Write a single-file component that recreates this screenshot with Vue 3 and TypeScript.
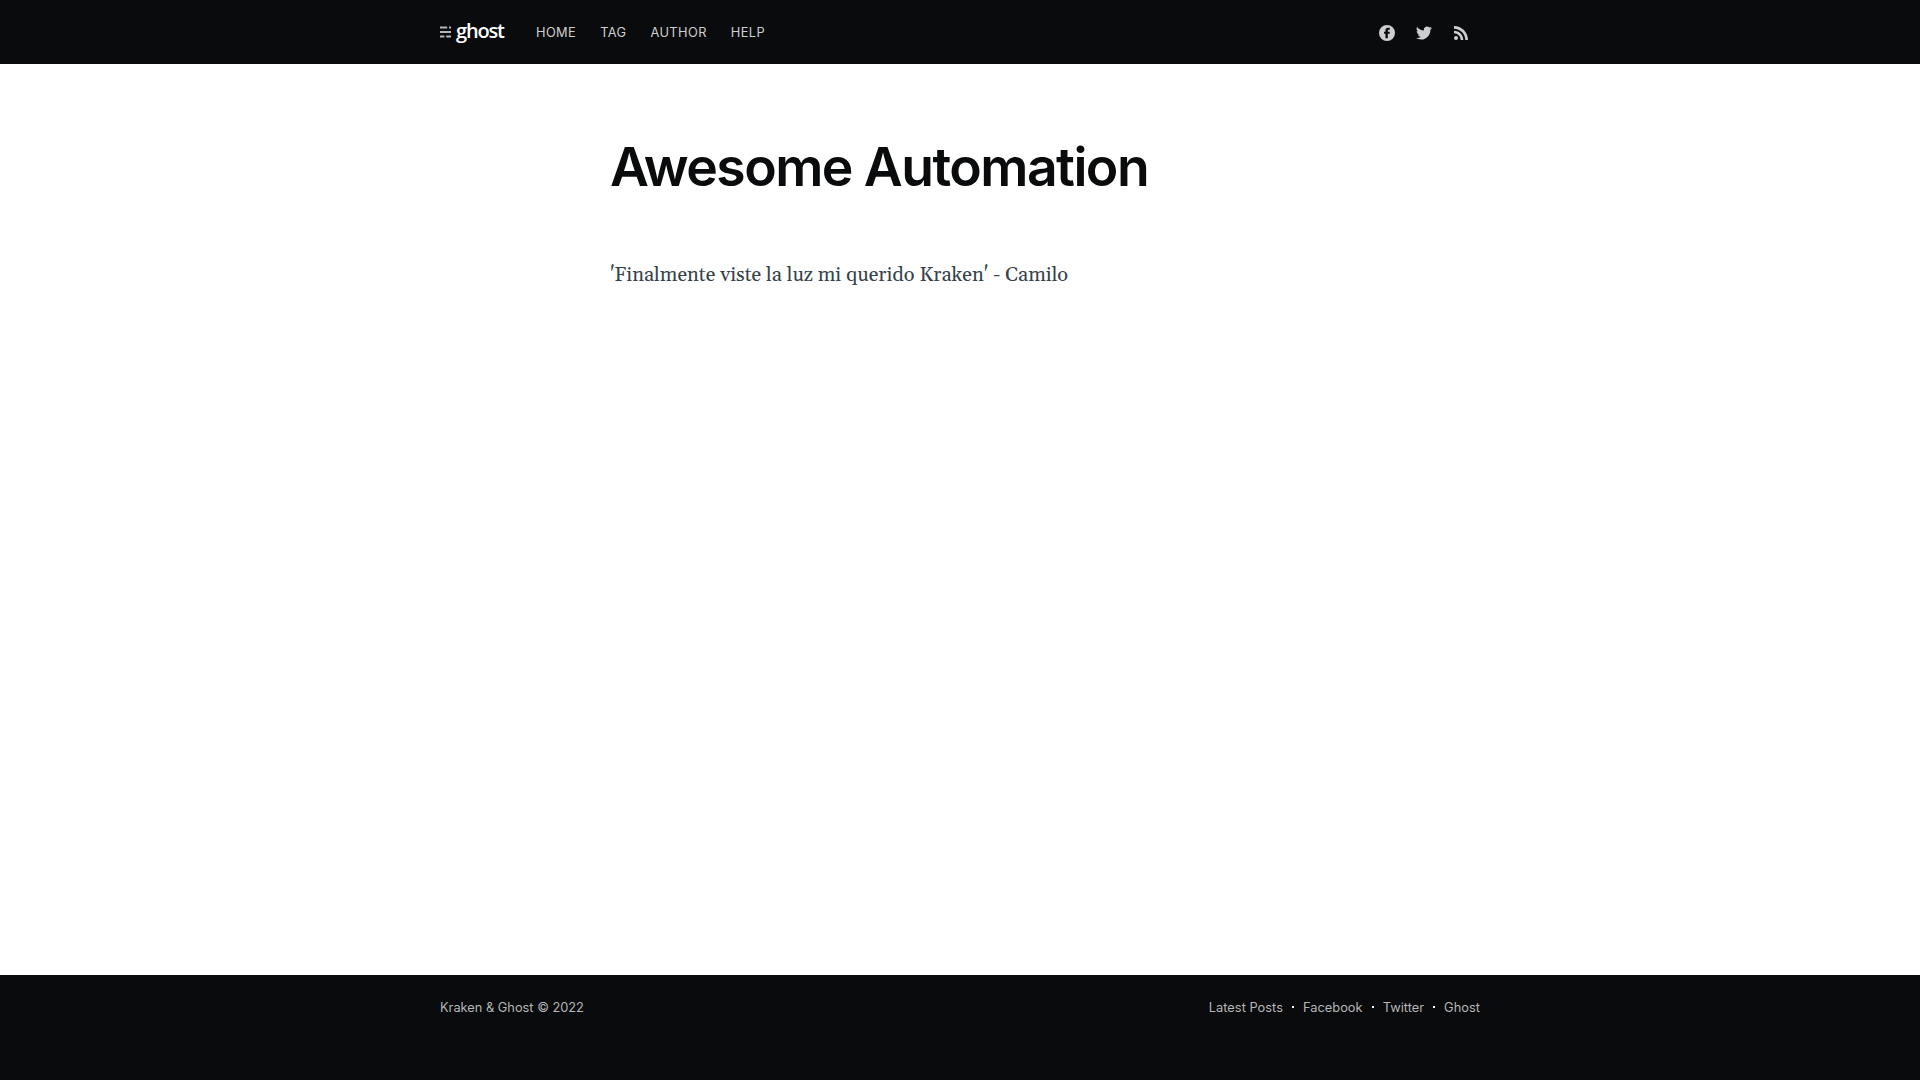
<script setup lang="ts">
interface NavItem {
  label: string
}

const navItems: NavItem[] = [{ label: 'Home' }, { label: 'Tag' }, { label: 'Author' }, { label: 'Help' }]
const footerLinks: NavItem[] = [{ label: 'Latest Posts' }, { label: 'Facebook' }, { label: 'Twitter' }, { label: 'Ghost' }]
</script>

<template>
  <div class="site">
    <header class="site-header">
      <nav class="inner nav">
        <a class="logo">
          <svg width="11" height="12" viewBox="0 0 11 12" fill="#b4b4b5">
            <path d="M0 .5h7.200v2H0zM9 .5h2v2H9zM0 5h11v2H0zM0 9.500h4.400v2H0zM6.200 9.500H11v2H6.200z" />
          </svg>
          <span>ghost</span>
        </a>
        <ul class="menu">
          <li v-for="item in navItems" :key="item.label"><a>{{ item.label }}</a></li>
        </ul>
        <div class="social">
          <svg width="16" height="16" viewBox="0 0 32 32"><path fill-rule="evenodd" d="M16 0a16 16 0 1 0 0 32a16 16 0 0 0 0-32zM21.500 5.500h-3.600c-3.200 0-5 1.900-5 4.800v3h-2.900v4h2.900v9.400h4.800v-9.400h3.600l.5-4h-4.100v-2.200c0-.9.400-1.400 1.300-1.400h2.500z" /></svg>
          <svg width="16" height="16" viewBox="0 0 24 24"><path d="M24 4.557a9.830 9.830 0 0 1-2.828.775 4.932 4.932 0 0 0 2.165-2.724 9.864 9.864 0 0 1-3.127 1.195 4.916 4.916 0 0 0-3.594-1.555c-3.179 0-5.515 2.966-4.797 6.045A13.978 13.978 0 0 1 1.671 3.149a4.930 4.930 0 0 0 1.523 6.574 4.903 4.903 0 0 1-2.229-.616c-.054 2.281 1.581 4.415 3.949 4.890a4.935 4.935 0 0 1-2.224.084 4.928 4.928 0 0 0 4.600 3.419A9.900 9.900 0 0 1 0 19.540a13.940 13.940 0 0 0 7.548 2.212c9.142 0 14.307-7.721 13.995-14.646A10.025 10.025 0 0 0 24 4.557z" /></svg>
          <svg class="rss" width="14" height="14" viewBox="0 0 24 24"><circle cx="3.430" cy="20.570" r="3.430" /><path d="M0 8v4.570c6.300 0 11.430 5.130 11.430 11.430H16C16 15.200 8.800 8 0 8z" /><path d="M0 0v4.570C10.700 4.570 19.430 13.300 19.430 24H24C24 10.770 13.230 0 0 0z" /></svg>
        </div>
      </nav>
    </header>

    <main class="content">
      <h1>Awesome Automation</h1>
      <p>'Finalmente viste la luz mi querido Kraken' - Camilo</p>
    </main>

    <footer class="site-footer">
      <div class="inner footer-row">
        <span>Kraken &amp; Ghost © 2022</span>
        <nav class="footer-nav">
          <a v-for="link in footerLinks" :key="link.label">{{ link.label }}</a>
        </nav>
      </div>
    </footer>
  </div>
</template>

<style>
body {
  margin: 0;
  background: #fff;
}
</style>

<style scoped>
.site {
  display: flex;
  flex-direction: column;
  height: 1080px;
  font-family: Inter, sans-serif;
}
.inner {
  width: 1040px;
  margin: 0 auto;
}
.site-header {
  height: 64px;
  background: #0a0b0c;
}
.nav {
  display: flex;
  align-items: center;
  height: 64px;
}
.logo {
  display: flex;
  align-items: center;
  width: 64px;
  color: #fff;
}
.logo svg {
  flex: none;
  margin-top: 0;
}
.logo span {
  margin: -2px 0 0 5px;
  font: 600 20px/24px "Open Sans", sans-serif;
  letter-spacing: -1.2px;
}
.menu {
  display: flex;
  gap: 24px;
  margin: 2px 0 0 32px;
  padding: 0;
  list-style: none;
  color: #ceced0;
  font-size: 12.8px;
  line-height: 20px;
  letter-spacing: 0.4px;
  text-transform: uppercase;
}
.social {
  display: flex;
  align-items: center;
  gap: 21px;
  margin: 2px 12px 0 auto;
  fill: #ceced0;
}
.rss {
  margin-left: 1px;
}
.content {
  flex: 1;
  width: 700px;
  margin: 0 auto;
}
h1 {
  margin: 71px 0 0;
  color: #0a0b0c;
  font-size: 53.5px;
  font-weight: 600;
  line-height: 63px;
  letter-spacing: -1.55px;
}
p {
  margin: 61px 0 0;
  color: #36434a;
  font-family: Georgia, Gelasio, serif;
  font-size: 20px;
  line-height: 32px;
}
.site-footer {
  height: 105px;
  background: #0a0b0c;
  color: #b5b6b6;
  font-size: 12.8px;
}
.footer-row {
  display: flex;
  justify-content: space-between;
  padding-top: 22px;
  line-height: 21px;
}
.footer-nav {
  display: flex;
  letter-spacing: 0.03px;
}
.footer-nav a + a::before {
  content: "";
  display: inline-block;
  width: 2px;
  height: 2px;
  margin: 0 9px 4px;
  background: #fff;
}
</style>
